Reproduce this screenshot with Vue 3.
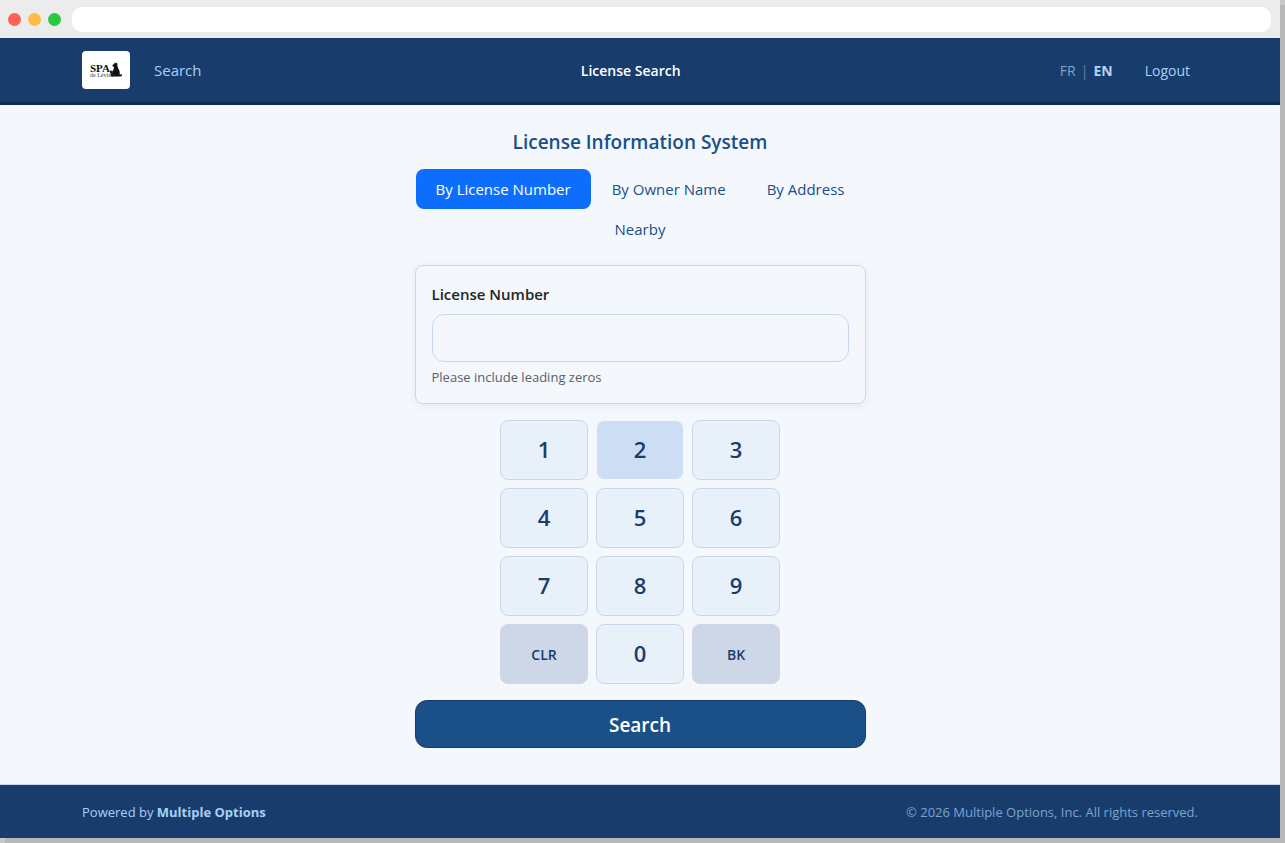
<script setup>
import { ref } from 'vue'

const tabs = ['By License Number', 'By Owner Name', 'By Address', 'Nearby']
const activeTab = ref(tabs[0])
const licenseNumber = ref('')
const keys = ['1', '2', '3', '4', '5', '6', '7', '8', '9', 'CLR', '0', 'BK']
const pressedKey = ref('2')

function press(key) {
  pressedKey.value = key
  if (key === 'CLR') licenseNumber.value = ''
  else if (key === 'BK') licenseNumber.value = licenseNumber.value.slice(0, -1)
  else licenseNumber.value += key
}
</script>

<template>
  <div class="frame">
    <div class="window">
      <div class="chrome">
        <span class="dot red"></span>
        <span class="dot yellow"></span>
        <span class="dot green"></span>
        <input class="address" type="text" aria-label="Address" />
      </div>

      <header class="header">
        <nav class="container bar">
          <div class="group">
            <a class="logo" href="#" aria-label="SPA de Lévis">
              <svg width="34" height="18" viewBox="0 0 34 18">
                <text x="1" y="11" class="logo-main">SPA</text>
                <text x="1" y="16" class="logo-sub">de Lévis</text>
                <path
                  d="M23.5 4 L25 3.1 L26 1.2 L26.8 2.4 L28.2 1.6 L28.4 4.5 C28.4 6 29.3 7 30.1 9 C30.8 10.6 31 12.3 30.6 13.4 C31.6 13.8 32 12.8 33 13.4 C33.4 15.2 31.6 15.8 29.3 15.4 L23 15.6 C21.8 15.2 22.8 14.2 24 14 C23.6 12 23.6 10.4 24.4 8.4 C24.8 7.4 25 6.6 25 5.8 C23.8 5.8 23.2 4.9 23.5 4 Z"
                  fill="#111"
                />
                <path d="M21.4 9 L22.4 10 L23.4 9.4 L24.2 11.4 L24 15.4 L21.4 15.4 C22.2 14 21.6 12.4 20.8 11.2 Z" fill="#222" />
              </svg>
            </a>
            <a class="nav-link" href="#">Search</a>
          </div>
          <strong class="title">License Search</strong>
          <div class="group small">
            <a class="lang" href="#">FR</a>
            <span class="divider">|</span>
            <a class="lang current" href="#">EN</a>
            <a class="logout" href="#">Logout</a>
          </div>
        </nav>
      </header>

      <main class="main">
        <form class="panel" @submit.prevent>
          <h1 class="heading">License Information System</h1>
          <div class="tabs">
            <button
              v-for="tab in tabs"
              :key="tab"
              type="button"
              class="tab"
              :class="{ active: tab === activeTab }"
              @click="activeTab = tab"
            >{{ tab }}</button>
          </div>
          <section class="card">
            <label class="label" for="license">License Number</label>
            <input id="license" v-model="licenseNumber" class="field" type="text" aria-describedby="hint" />
            <p id="hint" class="hint">Please include leading zeros</p>
          </section>
          <div class="keypad">
            <button
              v-for="key in keys"
              :key="key"
              type="button"
              class="key"
              :class="{ action: key.length > 1, pressed: key === pressedKey }"
              @click="press(key)"
            >{{ key }}</button>
          </div>
          <button class="submit" type="submit">Search</button>
        </form>
      </main>

      <footer class="footer">
        <div class="container bar">
          <span>Powered by <a class="company" href="#">Multiple Options</a></span>
          <span class="copyright">© 2026 Multiple Options, Inc. All rights reserved.</span>
        </div>
      </footer>
    </div>
  </div>
</template>

<style>
body {
  margin: 0;
  background: #b8b8b8;
}
</style>

<style scoped>
* {
  box-sizing: border-box;
}
.frame {
  display: flex;
  min-height: 100vh;
  padding: 0 5px 5px 0;
  background:
    linear-gradient(#c8c8c8, #c8c8c8) right top / 5px 5px no-repeat,
    linear-gradient(#c8c8c8, #c8c8c8) left bottom / 5px 5px no-repeat,
    #b8b8b8;
  font-family: "Segoe UI", "Open Sans", "Noto Sans", sans-serif;
  font-size: 15px;
  line-height: 24px;
  color: #212529;
}
.window {
  flex: 1;
  display: flex;
  flex-direction: column;
  background: #f4f8fd;
}
a {
  color: inherit;
  text-decoration: none;
}
button,
input {
  font: inherit;
}
.chrome {
  display: flex;
  align-items: center;
  gap: 7px;
  height: 38px;
  padding: 0 9px 0 8px;
  background: #ececec;
}
.dot {
  width: 13px;
  height: 13px;
  border-radius: 50%;
}
.red {
  background: #ff5f57;
}
.yellow {
  background: #febc40;
}
.green {
  background: #28c840;
}
.address {
  flex: 1;
  height: 25px;
  margin-left: 4px;
  padding: 0 12px;
  border: 0;
  border-radius: 10px;
  background: #fff;
}
.container {
  width: 100%;
  max-width: 1140px;
  margin: 0 auto;
  padding: 0 12px;
}
.bar {
  display: flex;
  align-items: center;
  justify-content: space-between;
}
.header {
  padding: 13px 0;
  border-bottom: 3px solid #0f2d54;
  background: #183d6d;
  color: #a8d0f5;
}
.group {
  display: flex;
  align-items: center;
}
.logo {
  display: flex;
  align-items: center;
  justify-content: center;
  width: 48px;
  height: 38px;
  margin-right: 16px;
  border-radius: 4px;
  background: #fff;
}
.logo-main {
  font: bold 11px "Liberation Serif", serif;
  fill: #111;
}
.logo-sub {
  font: 6px "Liberation Serif", serif;
  fill: #444;
}
.nav-link {
  padding: 0 8px;
}
.title {
  padding-top: 2px;
  font-size: 14px;
  font-weight: 600;
  color: #fff;
}
.small {
  padding: 2px 8px 0;
  font-size: 14px;
}
.lang {
  color: #7ba4d0;
}
.divider {
  margin: 0 5px;
  color: #6c8096;
}
.lang.current {
  font-weight: 700;
  color: #b0d5f8;
}
.logout {
  margin-left: 32px;
}
.main {
  flex: 1;
  padding: 25px 12px 36px;
}
.panel {
  display: flex;
  flex-direction: column;
  max-width: 451px;
  margin: 0 auto;
}
.heading {
  margin: 0 0 15px;
  font-size: 19px;
  font-weight: 600;
  line-height: 24px;
  text-align: center;
  color: #1b4f88;
}
.tabs {
  display: flex;
  flex-wrap: wrap;
  justify-content: center;
  column-gap: 1px;
  margin-bottom: 16px;
}
.tab {
  height: 40px;
  padding: 0 20px;
  border: 0;
  border-radius: 8px;
  background: transparent;
  color: #1b4f88;
}
.tab.active {
  background: #0d6efd;
  color: #fff;
}
.card {
  display: flex;
  flex-direction: column;
  margin-bottom: 16px;
  padding: 16px;
  border: 1px solid #c8d8ec;
  border-radius: 8px;
  box-shadow: 0 2px 8px rgba(24, 61, 109, 0.08);
}
.label {
  margin-bottom: 8px;
  font-weight: 600;
}
.field {
  width: 100%;
  height: 48px;
  padding: 8px 16px;
  border: 1px solid #c8d8ec;
  border-radius: 12px;
  background: #f4f8fd;
  color: #212529;
}
.hint {
  margin: 5px 0 0;
  font-size: 13px;
  line-height: 20px;
  color: #5a6068;
}
.keypad {
  display: grid;
  grid-template-columns: repeat(3, 1fr);
  gap: 8px;
  width: 280px;
  max-width: 100%;
  margin: 0 auto 16px;
}
.key {
  height: 60px;
  padding: 0 0 2px;
  border: 1px solid #c8d8ec;
  border-radius: 8px;
  background: #e8f0fa;
  font-size: 22px;
  font-weight: 600;
  color: #183d6d;
}
.key.pressed {
  border-color: #f4f8fd;
  background: #cdddf3;
}
.key.action {
  padding: 2px 0 0;
  border-color: #cdd7e8;
  background: #cdd7e8;
  font-size: 14px;
}
.submit {
  height: 48px;
  padding: 2px 0 0;
  border: 1px solid #183d6d;
  border-radius: 12px;
  background: #1b4f88;
  font-size: 19px;
  font-weight: 600;
  color: #fff;
}
.footer {
  padding: 17px 0 16px;
  border-top: 1px solid #c5dcee;
  background: #183d6d;
  font-size: 13px;
  line-height: 20px;
  color: #a8d0f5;
}
.company {
  font-weight: 700;
}
.copyright {
  color: #7ba4d0;
}
</style>
